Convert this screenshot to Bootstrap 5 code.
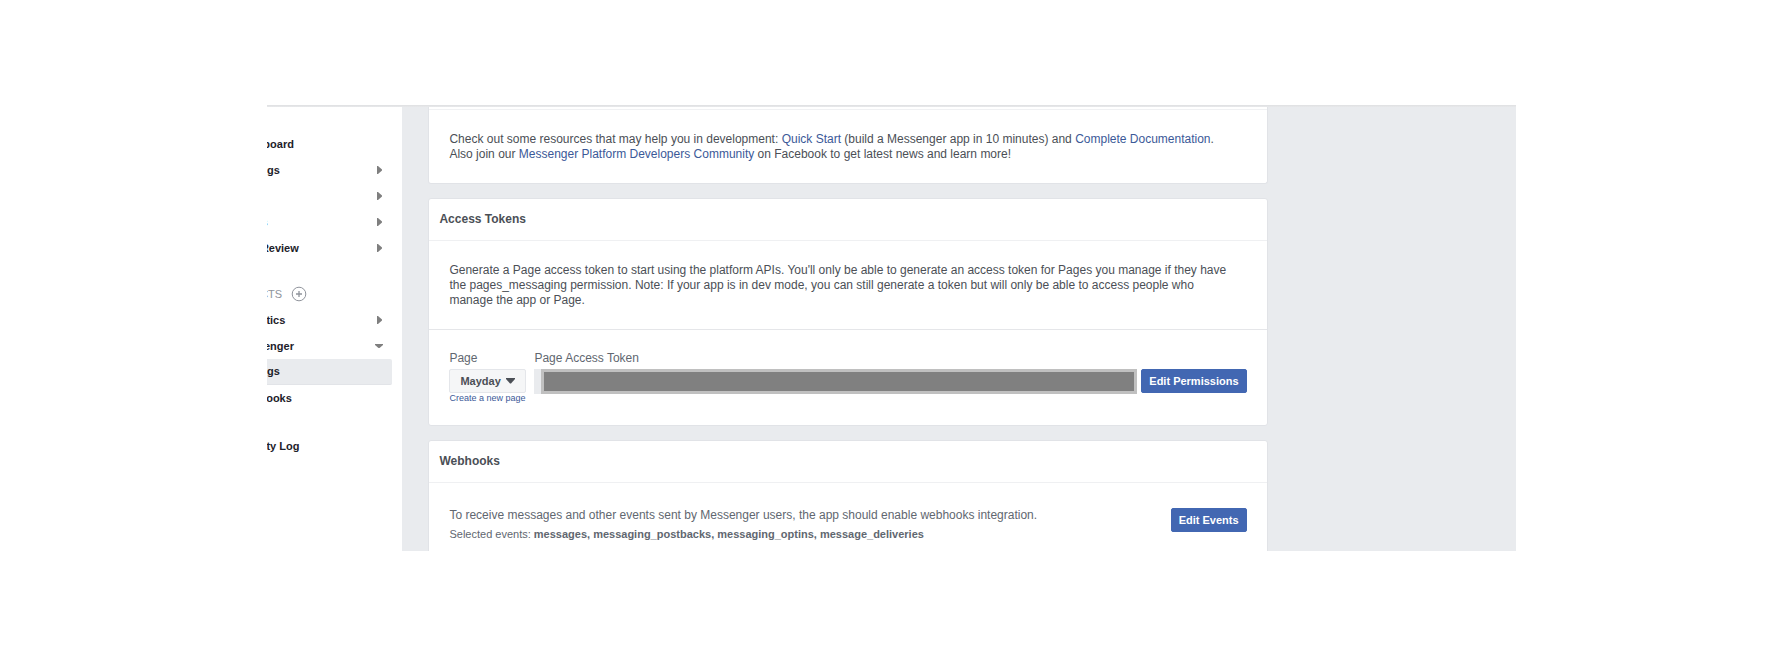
<!DOCTYPE html>
<html lang="en">
<head>
<meta charset="utf-8">
<meta name="viewport" content="width=device-width, initial-scale=1">
<title>Messenger Settings</title>
<link rel="stylesheet" href="https://cdn.jsdelivr.net/npm/bootstrap@5.3.0/dist/css/bootstrap.min.css">
<style>
  body { font-family: "Liberation Sans", Arial, sans-serif; font-size: 12px; line-height: 15px; color: #4b4f56; background: #fff; }
  a { color: #3b5998; text-decoration: none; }
  a:hover { text-decoration: underline; }
  .page-shell { padding: 105px 15% 98px; }
  .app-frame { background: #e9ebee; min-width: 0; }
  .app-frame::before { content: ""; position: absolute; inset: 0 0 auto 0; height: 2px; background: linear-gradient(#dfe0e2, #e8e9eb); z-index: 2; }
  .side-nav { width: 135px; background: #fff; padding-top: 26px; font-size: 11px; }
  .side-link { height: 26px; margin-left: -31px; padding-right: 19px; font-weight: 700; color: #1d2129; white-space: nowrap; }
  .side-link.current { margin-right: 10px; padding-right: 0; background: #e9ebee; border-radius: 2px; border-bottom: 1px solid #e2e4e8; }
  .side-link.apart { margin-top: 22px; }
  .side-head { height: 26px; margin: 20px 0 0 -47px; color: #90949c; gap: 9px; }
  .add-btn { width: 16px; height: 16px; border: 0; background: none; padding: 0; }
  .add-btn svg { display: block; }
  .main-col { flex: 1 1 0; min-width: 0; padding: 0 248px 0 26px; height: 0; min-height: 100%; }
  .panel { background: #fff; border: 1px solid #e1e3e7; border-radius: 3px; margin-bottom: 14px; }
  .panel-first { border-top: 0; border-radius: 0 0 3px 3px; }
  .panel-strip { height: 5px; border-bottom: 1px solid #f0f1f3; }
  .panel-title { font-size: 12px; line-height: 15px; font-weight: 700; margin: 0; padding: 13px 10px; border-bottom: 1px solid #eff0f2; }
  .panel-text { padding: 22px 20px 21px; }
  .token-row { border-top: 1px solid #e5e6e9; padding: 21px 20px; color: #616770; }
  .token-row label, .field-name { line-height: 15px; margin-bottom: 3px; }
  .hook-row { padding: 25px 20px; color: #616770; }
  .events-line { font-size: 11px; }
  .btn-sharp { height: 24px; padding: 0 6px; font-size: 11px; line-height: 22px; font-weight: 700; border-radius: 2px; white-space: nowrap; }
  .btn-blue, .btn-blue:hover { background: #4267b2; border-color: #4267b2; color: #fff; padding: 0 7px; }
  .btn-pick, .btn-pick:hover { width: 77px; background: #f5f6f7; border-color: #e4e6ea; color: #4b4f56; padding: 0 10px; }
  .mini-link { font-size: 9px; line-height: 11px; }
  .token-wrap { background: #e9ebee; padding-left: 7px; height: 25px; }
  .token-input { display: block; width: 100%; height: 25px; background: #808080; border: 3px solid #c0c0c0; border-radius: 0; color: #808080; padding: 0; }
</style>
</head>
<body>
<div class="page-shell d-flex flex-column vh-100">
  <div class="app-frame position-relative d-flex flex-grow-1 overflow-hidden">
    <nav class="side-nav flex-shrink-0 overflow-hidden" aria-label="App">
      <a href="#" class="side-link d-flex align-items-center justify-content-between">Dashboard</a>
      <a href="#" class="side-link d-flex align-items-center justify-content-between">Settings<svg width="8" height="10" viewBox="0 0 8 10"><path d="M2 1h1l4 3.500v1L3 9H2z" fill="#7f7f7f"/></svg></a>
      <a href="#" class="side-link d-flex align-items-center justify-content-between">Roles<svg width="8" height="10" viewBox="0 0 8 10"><path d="M2 1h1l4 3.500v1L3 9H2z" fill="#7f7f7f"/></svg></a>
      <a href="#" class="side-link d-flex align-items-center justify-content-between">Alerts<svg width="8" height="10" viewBox="0 0 8 10"><path d="M2 1h1l4 3.500v1L3 9H2z" fill="#7f7f7f"/></svg></a>
      <a href="#" class="side-link d-flex align-items-center justify-content-between">App Review<svg width="8" height="10" viewBox="0 0 8 10"><path d="M2 1h1l4 3.500v1L3 9H2z" fill="#7f7f7f"/></svg></a>
      <div class="side-head d-flex align-items-center"><span>PRODUCTS</span>
        <button type="button" class="add-btn" aria-label="Add product"><svg width="16" height="16" viewBox="0 0 16 16" fill="none" stroke="#90949c"><circle cx="8" cy="8" r="6.800"/><path d="M8 5v6M5 8h6" stroke-width="1.300"/></svg></button>
      </div>
      <a href="#" class="side-link d-flex align-items-center justify-content-between">Analytics<svg width="8" height="10" viewBox="0 0 8 10"><path d="M2 1h1l4 3.500v1L3 9H2z" fill="#7f7f7f"/></svg></a>
      <a href="#" class="side-link d-flex align-items-center justify-content-between">Messenger<svg width="8" height="10" viewBox="0 0 8 10"><path d="M0 3h8v1L4.500 7h-1L0 4z" fill="#7f7f7f"/></svg></a>
      <a href="#" class="side-link current d-flex align-items-center">Settings</a>
      <a href="#" class="side-link d-flex align-items-center">Webhooks</a>
      <a href="#" class="side-link apart d-flex align-items-center">Activity Log</a>
    </nav>

    <main class="main-col">
      <section class="panel panel-first">
        <div class="panel-strip"></div>
        <p class="panel-text mb-0">Check out some resources that may help you in development: <a href="#">Quick Start</a> (build a Messenger app in 10 minutes) and <a href="#">Complete Documentation</a>.<br>Also join our <a href="#">Messenger Platform Developers Community</a> on Facebook to get latest news and learn more!</p>
      </section>

      <section class="panel">
        <h2 class="panel-title">Access Tokens</h2>
        <p class="panel-text mb-0">Generate a Page access token to start using the platform APIs. You'll only be able to generate an access token for Pages you manage if they have<br>the pages_messaging permission. Note: If your app is in dev mode, you can still generate a token but will only be able to access people who<br>manage the app or Page.</p>
        <div class="token-row d-flex">
          <div class="d-flex flex-column align-items-start me-2">
            <div class="field-name">Page</div>
            <button type="button" class="btn btn-sharp btn-pick d-flex align-items-center justify-content-between">Mayday<svg width="9" height="6" viewBox="0 0 9 6"><path d="M0 0h9v1L5 5.500H4L0 1z" fill="#4b4f56"/></svg></button>
            <a href="#" class="mini-link">Create a new page</a>
          </div>
          <div class="flex-grow-1">
            <label for="token" class="d-block">Page Access Token</label>
            <div class="d-flex">
              <div class="token-wrap flex-grow-1"><input id="token" class="token-input" type="text" readonly></div>
              <button type="button" class="btn btn-sharp btn-blue ms-1">Edit Permissions</button>
            </div>
          </div>
        </div>
      </section>

      <section class="panel">
        <h2 class="panel-title">Webhooks</h2>
        <div class="hook-row d-flex justify-content-between align-items-start">
          <div>
            <p class="mb-1">To receive messages and other events sent by Messenger users, the app should enable webhooks integration.</p>
            <p class="mb-0 events-line">Selected events: <strong>messages, messaging_postbacks, messaging_optins, message_deliveries</strong></p>
          </div>
          <button type="button" class="btn btn-sharp btn-blue">Edit Events</button>
        </div>
      </section>
    </main>
  </div>
</div>
<script src="https://cdn.jsdelivr.net/npm/bootstrap@5.3.0/dist/js/bootstrap.bundle.min.js"></script>
</body>
</html>
